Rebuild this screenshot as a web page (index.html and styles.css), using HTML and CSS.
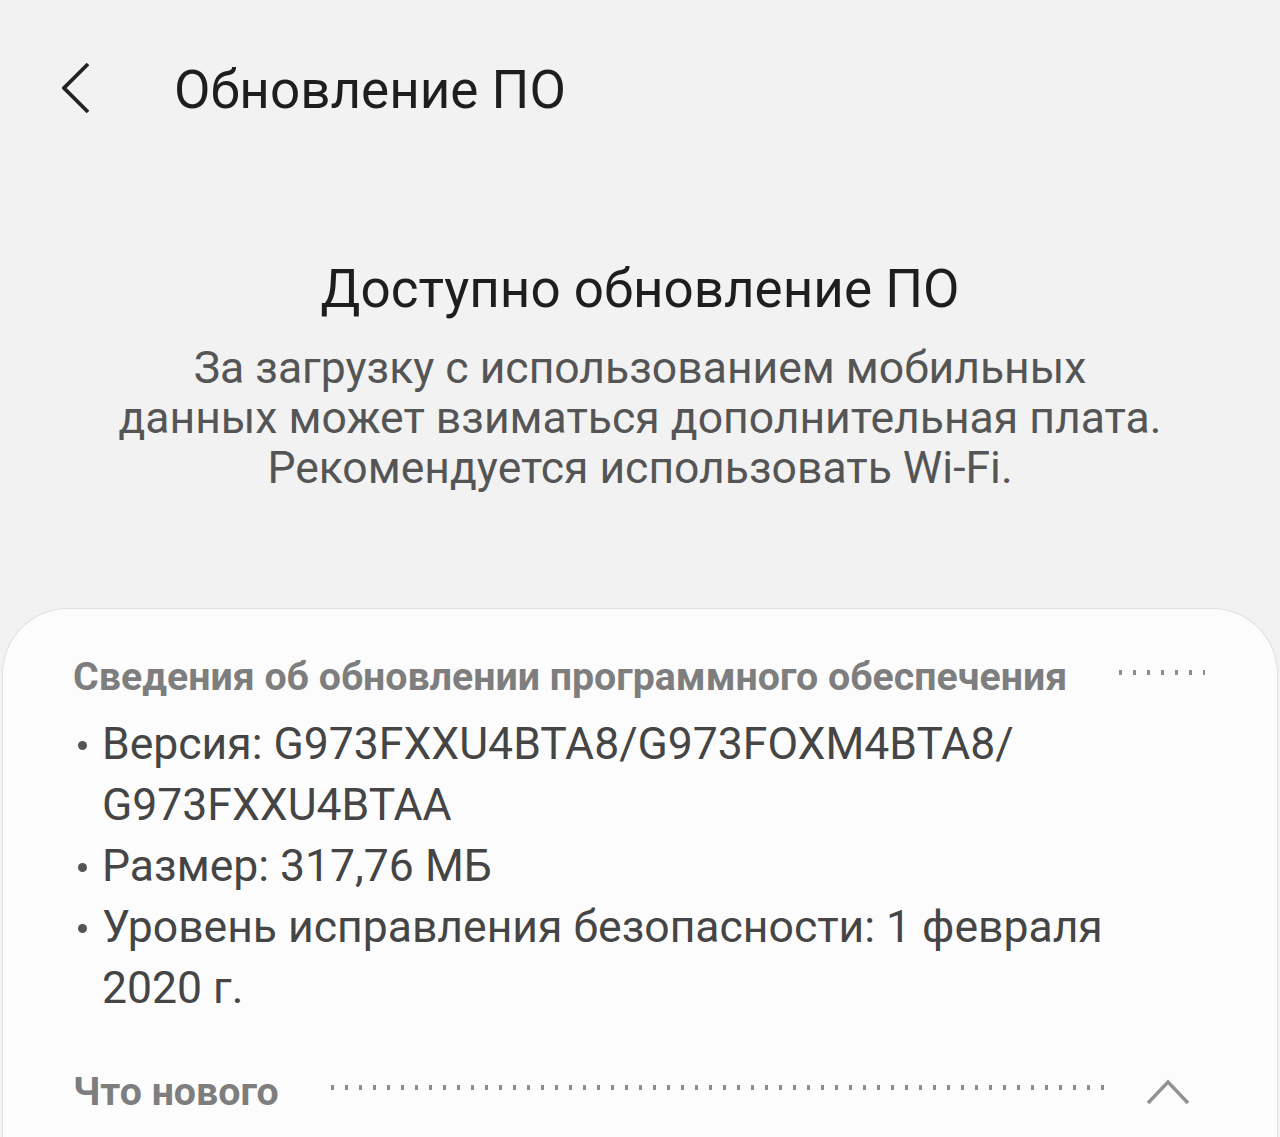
FILE: index.html
```html
<!DOCTYPE html>
<html lang="ru">

<head>
  <meta charset="UTF-8">
  <meta name="viewport" content="width=device-width, initial-scale=1.0">
  <title>Обновление ПО</title>
  <link rel="stylesheet" href="styles.css">
</head>

<body>
  <!-- шапка -->
  <header class="top-bar">
    <button class="back-btn" aria-label="Назад">
      <svg width="30" height="52" viewBox="0 0 30 52">
        <polyline points="26,2 2,26 26,50" fill="none" stroke="#222" stroke-width="3.8" />
      </svg>
    </button>
    <h1 class="top-title">Обновление ПО</h1>
  </header>

  <!-- сообщение -->
  <section class="notice">
    <h2 class="notice-title">Доступно обновление ПО</h2>
    <p class="notice-text">За загрузку с использованием мобильных<br>данных может взиматься дополнительная плата.<br>Рекомендуется использовать Wi-Fi.</p>
  </section>

  <!-- карточка со сведениями -->
  <section class="card">
    <div class="card-head">
      <span class="card-label">Сведения об обновлении программного обеспечения</span>
      <span class="dots dots-short"></span>
    </div>
    <ul class="info-list">
      <li>Версия: G973FXXU4BTA8/G973FOXM4BTA8/ G973FXXU4BTAA</li>
      <li>Размер: 317,76 МБ</li>
      <li>Уровень исправления безопасности: 1 февраля 2020 г.</li>
    </ul>
    <div class="card-head whats-new">
      <span class="card-label">Что нового</span>
      <span class="dots dots-long"></span>
      <svg class="chevron-up" width="46" height="30" viewBox="0 0 46 30">
        <polyline points="3,26 23,5 43,26" fill="none" stroke="#929292" stroke-width="3.4" />
      </svg>
    </div>
  </section>
</body>

</html>
```

FILE: styles.css
```css
html,
body {
  margin: 0;
  height: 100%;
}

body {
  display: flex;
  flex-direction: column;
  background: #f2f2f2;
  font-family: Roboto, "Noto Sans", sans-serif;
  overflow: hidden;
}

.top-bar {
  display: flex;
  align-items: flex-start;
  height: 180px;
  padding: 58px 0 0 62px;
  box-sizing: border-box;
  flex-shrink: 0;
}

.back-btn {
  display: flex;
  padding: 0;
  border: 0;
  background: none;
  margin: 4px 82px 0 0;
}

.top-title {
  margin: 0;
  font-size: 53px;
  line-height: 64px;
  font-weight: 400;
  color: #1e1e1e;
}

.notice {
  text-align: center;
  padding-top: 79px;
  flex-shrink: 0;
}

.notice-title {
  margin: 0;
  font-size: 53px;
  font-weight: 400;
  color: #1e1e1e;
  line-height: 60px;
}

.notice-text {
  margin: 24px 0 0;
  font-size: 44.5px;
  line-height: 50px;
  color: #555;
}

.card {
  flex: 1;
  margin: 115px 2px 0;
  background: #fcfcfc;
  border: 1px solid #e0e0e0;
  border-bottom: 0;
  border-radius: 66px 66px 0 0;
  padding: 44px 74px 0 70px;
}

.card-head {
  display: flex;
  align-items: center;
  gap: 52px;
}

.card-label {
  font-size: 39.3px;
  line-height: 48px;
  font-weight: 700;
  color: #7e7e7e;
  white-space: nowrap;
}

.dots {
  height: 5px;
  margin-bottom: 10px;
  background-image: linear-gradient(90deg, #8c8c8c 3px, transparent 3px);
  background-size: 14px 5px;
  background-repeat: repeat-x;
}

.dots-short {
  flex: 0 0 86px;
}

.dots-long {
  flex: 1;
}

.info-list {
  margin: 13px 0 0;
  padding: 0 20px 0 29px;
  list-style: none;
  font-size: 44.5px;
  line-height: 61px;
  color: #454545;
}

.info-list li {
  position: relative;
}

.info-list li::before {
  content: "";
  position: absolute;
  left: -24px;
  top: 27px;
  width: 9px;
  height: 9px;
  border-radius: 50%;
  background: #555;
}

.whats-new {
  margin-top: 49px;
}

.chevron-up {
  margin: 0 12px 0 -12px;
}
```
